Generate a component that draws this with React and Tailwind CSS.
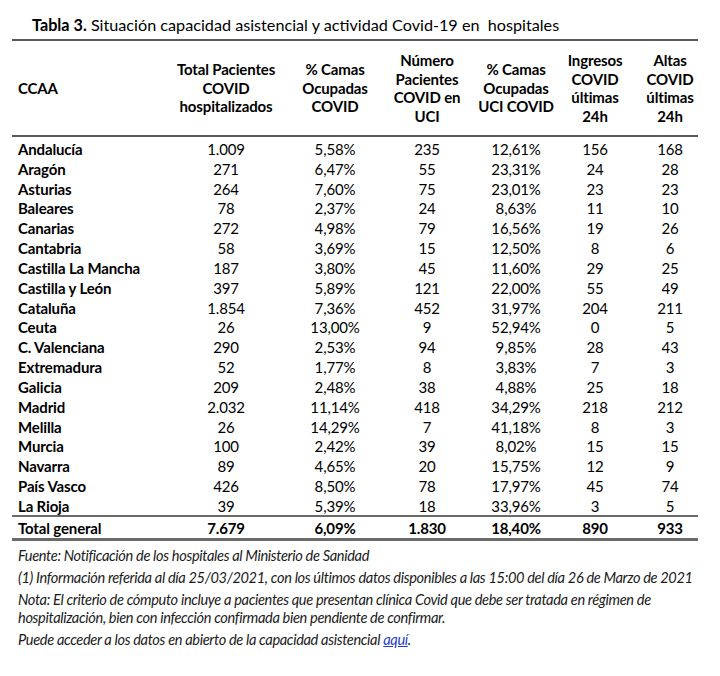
import React from "react";

const rows = [
    ["Andalucía", "1.009", "5,58%", "235", "12,61%", "156", "168"],
    ["Aragón", "271", "6,47%", "55", "23,31%", "24", "28"],
    ["Asturias", "264", "7,60%", "75", "23,01%", "23", "23"],
    ["Baleares", "78", "2,37%", "24", "8,63%", "11", "10"],
    ["Canarias", "272", "4,98%", "79", "16,56%", "19", "26"],
    ["Cantabria", "58", "3,69%", "15", "12,50%", "8", "6"],
    ["Castilla La Mancha", "187", "3,80%", "45", "11,60%", "29", "25"],
    ["Castilla y León", "397", "5,89%", "121", "22,00%", "55", "49"],
    ["Cataluña", "1.854", "7,36%", "452", "31,97%", "204", "211"],
    ["Ceuta", "26", "13,00%", "9", "52,94%", "0", "5"],
    ["C. Valenciana", "290", "2,53%", "94", "9,85%", "28", "43"],
    ["Extremadura", "52", "1,77%", "8", "3,83%", "7", "3"],
    ["Galicia", "209", "2,48%", "38", "4,88%", "25", "18"],
    ["Madrid", "2.032", "11,14%", "418", "34,29%", "218", "212"],
    ["Melilla", "26", "14,29%", "7", "41,18%", "8", "3"],
    ["Murcia", "100", "2,42%", "39", "8,02%", "15", "15"],
    ["Navarra", "89", "4,65%", "20", "15,75%", "12", "9"],
    ["País Vasco", "426", "8,50%", "78", "17,97%", "45", "74"],
    ["La Rioja", "39", "5,39%", "18", "33,96%", "3", "5"],
];

const total = ["Total general", "7.679", "6,09%", "1.830", "18,40%", "890", "933"];

// anchos de columna medidos sobre la captura
const cols = "grid grid-cols-[148px_132px_86px_98px_80px_78px_64px]";

function Row({ r, bold }) {
    return (
        <div className={`${cols} h-[19.83px] items-center ${bold ? "font-bold" : ""}`}>
            <div className="pl-[6px] font-bold whitespace-nowrap">{r[0]}</div>
            {r.slice(1).map((v, i) => (
                <div key={i} className={`text-center ${i === 5 ? "pl-[8px]" : ""}`}>
                    {v}
                </div>
            ))}
        </div>
    );
}

export default function App() {
    const head = [
        ["Total Pacientes", "COVID", "hospitalizados"],
        ["% Camas", "Ocupadas", "COVID"],
        ["Número", "Pacientes", "COVID en", "UCI"],
        ["% Camas", "Ocupadas", "UCI COVID"],
        ["Ingresos", "COVID", "últimas", "24h"],
        ["Altas", "COVID", "últimas", "24h"],
    ];

    return (
        <div className="w-[720px] h-[676px] bg-white text-black font-['Lato',sans-serif] overflow-hidden">
            <p className="pl-[32px] pt-[15px] text-[16.2px] leading-[20px]">
                <span className="font-bold">Tabla 3.</span> Situación capacidad asistencial y actividad Covid-19 en&nbsp; hospitales
            </p>

            <div className="ml-[12px] w-[686px] mt-[4px] text-[15px] tracking-[-0.15px]">
                {/* CABECERA */}
                <div className={`${cols} h-[98px] items-center font-bold leading-[18.5px] border-t-2 border-b-2 border-[#5a5a5a]`}>
                    <div className="pl-[6px]">CCAA</div>
                    {head.map((h, i) => (
                        <div key={i} className={`text-center ${i === 5 ? "pl-[8px]" : ""}`}>
                            {h.map((l, j) => (
                                <div key={j}>{l}</div>
                            ))}
                        </div>
                    ))}
                </div>

                {/* FILAS */}
                <div className="pt-[1px]">
                    {rows.map((r) => (
                        <Row key={r[0]} r={r} />
                    ))}
                </div>
                <div className="border-t-2 border-b-[3px] border-[#6a6a6a] h-[26px] flex items-center">
                    <div className="w-full">
                        <Row r={total} bold />
                    </div>
                </div>
            </div>

            {/* NOTAS */}
            <div className="pl-[18px] pr-[20px] mt-[6px] text-[14.6px] italic tracking-[-0.35px] leading-[18px] text-[#1a1a1a]">
                <p className="mb-[4px]">Fuente: Notificación de los hospitales al Ministerio de Sanidad</p>
                <p className="mb-[4px] whitespace-nowrap">(1) Información referida al día 25/03/2021, con los últimos datos disponibles a las 15:00 del día 26 de Marzo de 2021</p>
                <p className="mb-[4px]">
                    Nota: El criterio de cómputo incluye a pacientes que presentan clínica Covid que debe ser tratada en régimen de
                    <br />
                    hospitalización, bien con infección confirmada bien pendiente de confirmar.
                </p>
                <p>
                    Puede acceder a los datos en abierto de la capacidad asistencial{" "}
                    <a className="text-[#1f3fd0] underline">aquí</a>.
                </p>
            </div>
        </div>
    );
}
